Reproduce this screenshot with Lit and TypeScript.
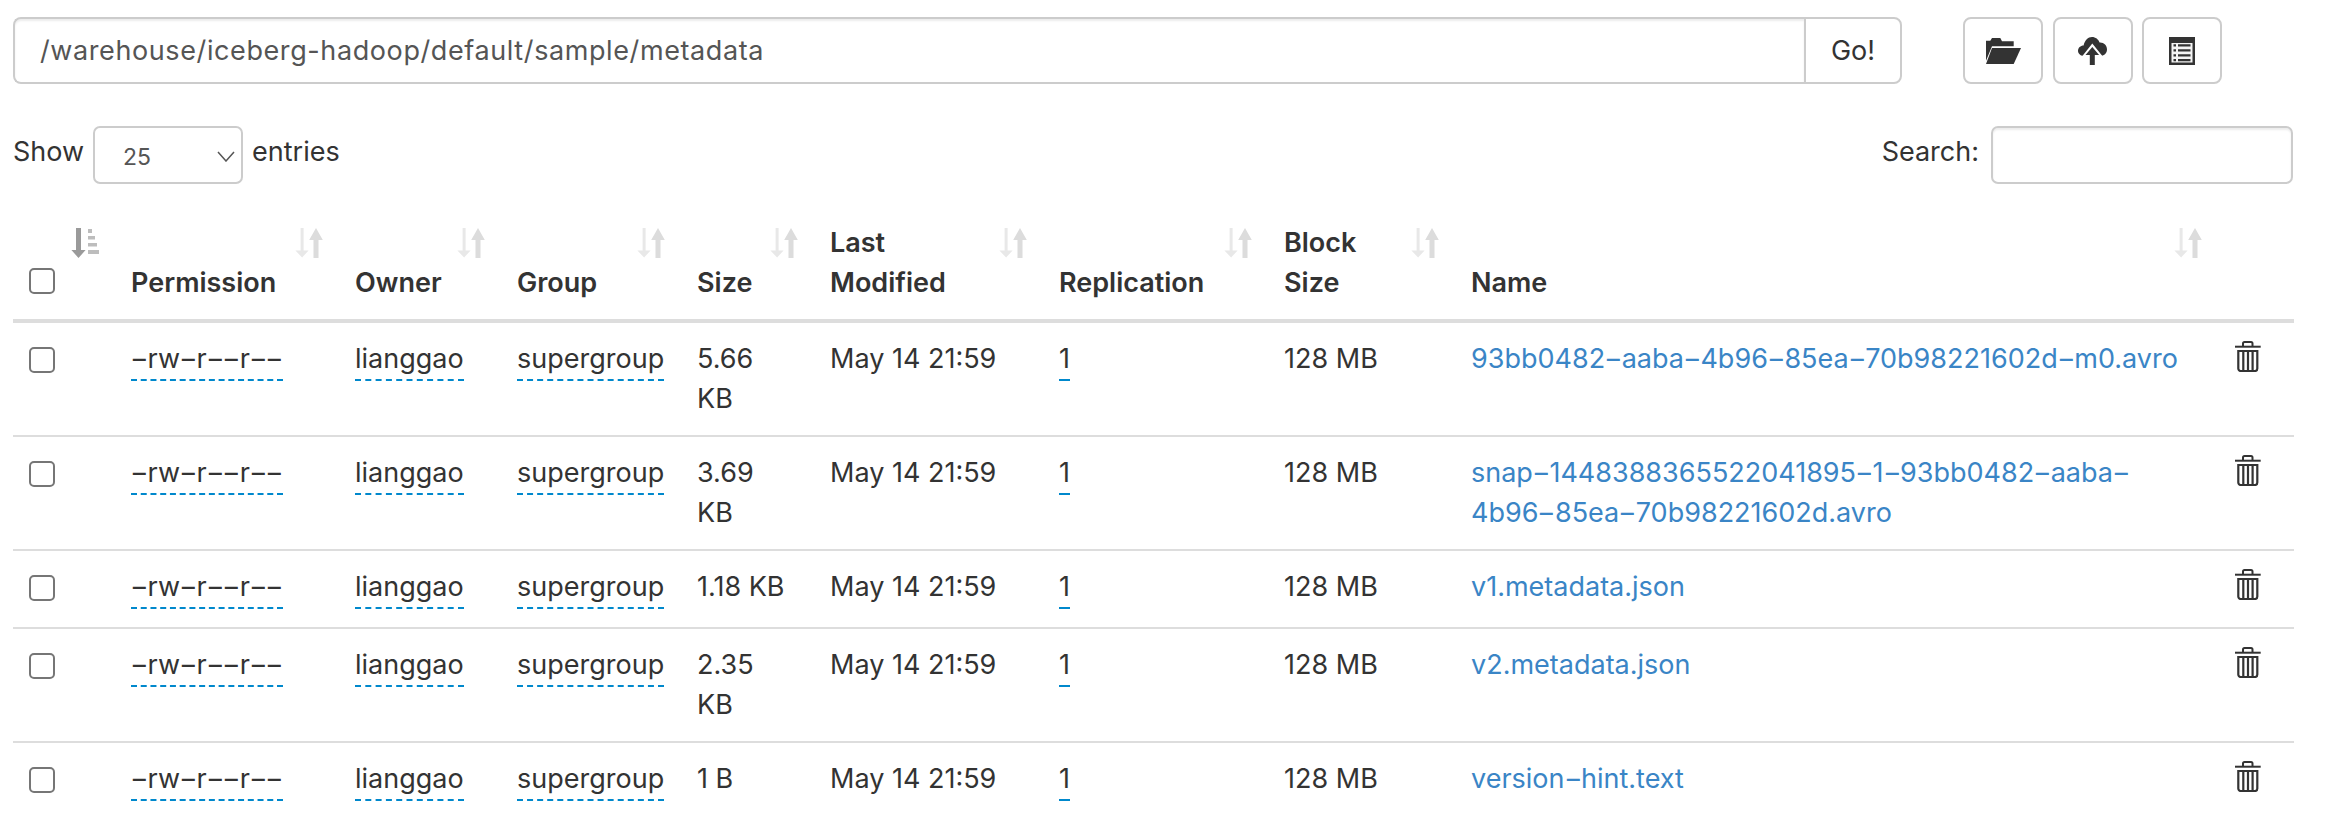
import { LitElement, html, css, svg } from "lit";
import { customElement } from "lit/decorators.js";

const FILES = [
  { size: "5.66 KB", name: "93bb0482-aaba-4b96-85ea-70b98221602d-m0.avro" },
  { size: "3.69 KB", name: "snap-1448388365522041895-1-93bb0482-aaba-4b96-85ea-70b98221602d.avro" },
  { size: "1.18 KB", name: "v1.metadata.json" },
  { size: "2.35 KB", name: "v2.metadata.json" },
  { size: "1 B", name: "version-hint.text" },
];

const COLUMNS = [
  { cls: "c-perm", label: "Permission" },
  { cls: "c-owner", label: "Owner" },
  { cls: "c-group", label: "Group" },
  { cls: "c-size", label: "Size" },
  { cls: "c-mod", label: "Last Modified" },
  { cls: "c-rep", label: "Replication" },
  { cls: "c-block", label: "Block Size" },
  { cls: "c-name", label: "Name" },
];

/* The reference font draws a much longer hyphen; keep the real character and widen it. */
const wide = (text: string) =>
  text.split(/(-)/).map((part) => (part === "-" ? html`<span class="hy">-</span>` : part));

const sortBoth = html`<svg class="sort" width="28" height="30" viewBox="0 0 28 30">
  <path fill="#e8e8e8" d="M5.600 0h3v22.500h5L7.100 29.500 .4 22.500h5.200z"/>
  <path fill="#dcdcdc" d="M21 0l6.800 12h-4.300v18h-5V12h-4.300z"/>
</svg>`;

const sortAsc = html`<svg class="sort" width="28" height="30" viewBox="0 0 28 30">
  <path fill="#9a9a9a" d="M5 0h5v22h4.600L7.500 30 .4 22H5z"/>
  <path fill="#bdbdbd" d="M17 1h4v4h-4zM17 8h7v3.500h-7zM17 15h9v3.500h-9zM17 22h11v4H17z"/>
</svg>`;

const folderIcon = svg`<path fill="#333" d="M0 2.700h4.300L6 0h8.300L16 3.300h11.700v5H6L0 22.700z"/><path fill="#333" d="M6 10h29l-7.300 16H0z"/>`;
const cloudIcon = svg`
  <path fill="#333" d="M5.600 8.400C6.800 3.400 10 0 14 0c3.500 0 6.500 2.300 7.600 5.600C25.800 5.300 29 8.300 29 12.500c0 3.600-2.700 6.300-6 6.300H5.500C2.400 18.800 0 16.500 0 13.700c0-2.900 2.500-5.300 5.600-5.300z"/>
  <path fill="#fff" d="M14.300 6.500L4 19.500h6.500V28h7.500v-8.500h6.800z"/>
  <path fill="#333" d="M14.300 10L7.500 18h4.300v10h5V18h4.300z"/>`;
const listIcon = svg`
  <path fill="#333" d="M0 0h26v28H0z"/>
  <path fill="#f4f4f4" d="M2.500 6h21v19.500h-21z"/>
  <path fill="#333" d="M4.500 7.200h2.500v2.300H4.500zM9 7.200h12.500v2.300H9zM4.500 12.200h2.500v2.300H4.500zM9 12.200h12.500v2.300H9zM4.500 17.200h2.500v2.300H4.500zM9 17.200h12.500v2.300H9zM4.500 22h2.500v2.300H4.500zM9 22h12.500v2.300H9z"/>`;

const trashIcon = html`<svg class="trash" width="26" height="31" viewBox="0 0 26 31" fill="none" stroke="#333" stroke-width="2">
  <path d="M0 5.700h25.700"/>
  <path d="M8 5.500V2.500c0-.9.700-1.500 1.500-1.500h6.500c.9 0 1.500.6 1.500 1.500v3"/>
  <path d="M3.300 10h19v17.500c0 1.400-1 2.500-2.300 2.500H5.600c-1.300 0-2.300-1.100-2.300-2.500z" stroke-width="2.200"/>
  <path d="M8.300 10v20M13 10v20M17.600 10v20" stroke-width="2.200"/>
</svg>`;

@customElement("app-root")
export class AppRoot extends LitElement {
  static styles = css`
    :host {
      display: block;
      box-sizing: border-box;
      width: 2342px;
      padding: 17px 49px 0 13px;
      font-family: Inter, "Liberation Sans", sans-serif;
      font-size: 27px;
      line-height: 40px;
      color: #333;
      background: #fff;
    }
    * { box-sizing: border-box; }

    .hy {
      display: inline-block;
      width: 16.500px;
      text-align: center;
      transform: scaleX(1.500);
    }

    .toolbar { display: flex; align-items: stretch; height: 67px; margin-bottom: 42px; }
    .path-group { display: flex; width: 1889px; }
    .path {
      flex: 1;
      min-width: 0;
      font: inherit;
      letter-spacing: 0.6px;
      color: #555;
      padding: 0 25px;
      border: 2px solid #ccc;
      border-right: none;
      border-radius: 8px 0 0 8px;
      box-shadow: inset 0 2px 2px rgba(0, 0, 0, 0.075);
      outline: none;
      background: #fff;
    }
    .go {
      width: 98px;
      font: inherit;
      color: #333;
      background: #fff;
      border: 2px solid #ccc;
      border-radius: 0 8px 8px 0;
      padding: 0;
    }
    .tools { display: flex; gap: 9.500px; margin-left: 61px; }
    .tool {
      width: 80px;
      display: flex;
      align-items: center;
      justify-content: center;
      background: #fff;
      border: 2px solid #ccc;
      border-radius: 8px;
      padding: 0;
    }

    .controls { display: flex; justify-content: space-between; align-items: center; height: 58px; margin-bottom: 23px; }
    .length, .search { display: flex; align-items: center; gap: 9px; }
    .search { gap: 12px; }
    .caption { margin-bottom: 6px; }
    .select-wrap { position: relative; width: 150px; height: 58px; }
    .select {
      appearance: none;
      width: 100%;
      height: 100%;
      font-family: inherit;
      font-size: 23px;
      color: #555;
      background: #fff;
      border: 2px solid #ccc;
      border-radius: 7px;
      padding: 4px 0 0 28px;
      outline: none;
    }
    .chev { position: absolute; left: 124px; top: 25px; pointer-events: none; }
    .search-input {
      width: 302px;
      height: 58px;
      font: inherit;
      border: 2px solid #ccc;
      border-radius: 7px;
      box-shadow: inset 0 2px 2px rgba(0, 0, 0, 0.075);
      outline: none;
    }

    table { width: 2280px; table-layout: fixed; border-collapse: separate; border-spacing: 0; }
    th {
      position: relative;
      padding: 16px 60px 16px 19px;
      text-align: left;
      vertical-align: bottom;
      font-weight: 600;
      border-bottom: 4px solid #ddd;
    }
    td {
      height: 78px;
      padding: 16px 19px;
      vertical-align: top;
      border-bottom: 2px solid #ddd;
    }
    tbody tr:last-child td { height: 76px; border-bottom: none; }
    .sort { position: absolute; right: 13px; top: 21px; }
    th.c-check { width: 99px; height: 116px; padding-left: 16px; padding-right: 0; }
    td.c-check { padding-left: 16px; padding-right: 0; }
    .c-perm { width: 224px; }
    .c-owner { width: 162px; }
    .c-group { width: 180px; }
    .c-size { width: 133px; }
    .c-mod { width: 229px; }
    .c-rep { width: 225px; }
    .c-block { width: 187px; }
    .c-name { width: 763px; }
    .c-del { width: 78px; }
    td.c-size { padding-right: 19px; }

    .box {
      appearance: none;
      display: block;
      width: 26px;
      height: 26px;
      margin: 8px 0 0;
      background: #fff;
      border: 2px solid #767676;
      border-radius: 5px;
    }
    th .box { margin: 0 0 9px; }
    .editable {
      display: inline-block;
      border-bottom: 2px dashed #0088cc;
      color: #333;
    }
    a { color: #3a85c6; text-decoration: none; }
    .trash { display: block; margin: 2px 0 0 1px; }
  `;

  render() {
    return html`
      <div class="toolbar">
        <div class="path-group">
          <input class="path" .value=${"/warehouse/iceberg-hadoop/default/sample/metadata"} />
          <button class="go">Go!</button>
        </div>
        <div class="tools">
          <button class="tool"><svg width="35" height="26" viewBox="0 0 35 26">${folderIcon}</svg></button>
          <button class="tool"><svg width="29" height="28" viewBox="0 0 29 28">${cloudIcon}</svg></button>
          <button class="tool"><svg width="26" height="28" viewBox="0 0 26 28">${listIcon}</svg></button>
        </div>
      </div>

      <div class="controls">
        <label class="length">
          <span class="caption">Show</span>
          <span class="select-wrap">
            <select class="select"><option>25</option></select>
            <svg class="chev" width="18" height="11" viewBox="0 0 18 11" fill="none" stroke="#555" stroke-width="1.500"><path d="M1 1l8 9 8-9"/></svg>
          </span>
          <span class="caption">entries</span>
        </label>
        <label class="search"><span class="caption">Search:</span> <input class="search-input" /></label>
      </div>

      <table>
        <thead>
          <tr>
            <th class="c-check">${sortAsc}<input class="box" type="checkbox" /></th>
            ${COLUMNS.map((c) => html`<th class=${c.cls}>${sortBoth}${c.label}</th>`)}
            <th class="c-del"></th>
          </tr>
        </thead>
        <tbody>
          ${FILES.map(
            (f) => html`
              <tr>
                <td class="c-check"><input class="box" type="checkbox" /></td>
                <td><span class="editable">${wide("-rw-r--r--")}</span></td>
                <td><span class="editable">lianggao</span></td>
                <td><span class="editable">supergroup</span></td>
                <td class="c-size">${f.size}</td>
                <td>May 14 21:59</td>
                <td><span class="editable">1</span></td>
                <td>128 MB</td>
                <td><a href="#">${wide(f.name)}</a></td>
                <td>${trashIcon}</td>
              </tr>
            `
          )}
        </tbody>
      </table>
    `;
  }
}
